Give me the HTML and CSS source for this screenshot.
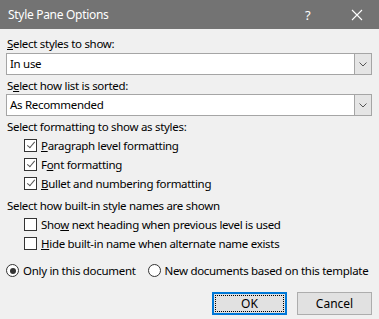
FILE: index.html
```html
<!DOCTYPE html>
<html lang="en">
<head>
    <meta charset="UTF-8">
    <title>Style Pane Options</title>
    <link rel="stylesheet" href="styles.css">
</head>
<body>
    <div class="dialog">
        <div class="titlebar">
            <span class="title">Style Pane Options</span>
            <span class="help">?</span>
            <span class="close">
                <svg width="12" height="12" viewBox="0 0 12 12"><path d="M1 1 L11 11 M11 1 L1 11" stroke="#fff" stroke-width="1.1" fill="none"/></svg>
            </span>
        </div>

        <div class="content">
            <div class="label l1"><u>S</u>elect styles to show:</div>
            <div class="select">
                <span class="value">In use</span>
                <span class="arrow"><svg width="8" height="5" viewBox="0 0 8 5"><path d="M0.5 0.5 L4 4 L7.5 0.5" stroke="#555" fill="none"/></svg></span>
            </div>

            <div class="label l2">S<u>e</u>lect how list is sorted:</div>
            <div class="select">
                <span class="value">As Recommended</span>
                <span class="arrow"><svg width="8" height="5" viewBox="0 0 8 5"><path d="M0.5 0.5 L4 4 L7.5 0.5" stroke="#555" fill="none"/></svg></span>
            </div>

            <div class="label l3">Select formatting to show as styles:</div>
            <div class="checks">
                <div class="check-row"><span class="box checked"></span><span><u>P</u>aragraph level formatting</span></div>
                <div class="check-row"><span class="box checked"></span><span>F<u>o</u>nt formatting</span></div>
                <div class="check-row"><span class="box checked"></span><span><u>B</u>ullet and numbering formatting</span></div>
            </div>

            <div class="label l4">Select how built-in style names are shown</div>
            <div class="checks">
                <div class="check-row"><span class="box"></span><span>Sho<u>w</u> next heading when previous level is used</span></div>
                <div class="check-row"><span class="box"></span><span><u>H</u>ide built-in name when alternate name exists</span></div>
            </div>

            <div class="radios">
                <div class="radio-row"><span class="radio on"></span><span>Only in this document</span></div>
                <div class="radio-row"><span class="radio"></span><span>New documents based on this template</span></div>
            </div>

            <div class="buttons">
                <button class="btn default"><span class="focus">OK</span></button>
                <button class="btn">Cancel</button>
            </div>
        </div>
    </div>
</body>
</html>
```

FILE: styles.css
```css
html, body {
    margin: 0;
    padding: 0;
}
body {
    font-family: "Noto Sans", "Open Sans", sans-serif;
    font-size: 11.5px;
    letter-spacing: -0.3px;
    color: #000;
    background-color: #f0f0f0;
    width: 379px;
    height: 319px;
    overflow: hidden;
    white-space: nowrap;
}
.dialog {
    width: 379px;
    height: 319px;
    background-color: #f0f0f0;
}
.titlebar {
    height: 29px;
    background-color: #737373;
    color: #fff;
    display: flex;
    align-items: center;
}
.title {
    margin-left: 8px;
    font-size: 12px;
    flex: 1;
}
.help {
    width: 12px;
    margin-right: 34px;
    font-size: 13px;
}
.close {
    width: 12px;
    height: 12px;
    margin-right: 16px;
    display: flex;
}
.content {
    padding: 0 7px 0 6px;
}
.label {
    line-height: 15px;
    padding-left: 1px;
}
.l1 {
    margin-top: 7px;
    margin-bottom: 2px;
}
.l2 {
    margin-top: 3px;
    margin-bottom: 1px;
}
.l3 {
    margin-top: 3px;
}
.l4 {
    margin-top: 5px;
}
.select {
    height: 20px;
    border: 1px solid #a5a5a5;
    background-color: #fff;
    display: flex;
    align-items: stretch;
}
.select .value {
    flex: 1;
    padding-left: 3px;
    line-height: 20px;
}
.select .arrow {
    width: 16px;
    background-color: #e5e5e5;
    border-left: 1px solid #a5a5a5;
    display: flex;
    align-items: center;
    justify-content: center;
}
.checks {
    padding-left: 18px;
    margin-top: 2px;
}
.check-row {
    height: 19px;
    display: flex;
    align-items: center;
}
.box {
    width: 11px;
    height: 11px;
    border: 1px solid #333;
    background-color: #fff;
    margin-right: 4px;
    position: relative;
}
.box.checked::after {
    content: "";
    position: absolute;
    left: 4px;
    top: 0px;
    width: 3px;
    height: 7px;
    border-right: 1px solid #555;
    border-bottom: 1px solid #555;
    transform: rotate(40deg);
}
.radios {
    display: flex;
    margin-top: 8px;
}
.radio-row {
    display: flex;
    align-items: center;
    height: 19px;
    margin-right: 12px;
}
.radio {
    width: 11px;
    height: 11px;
    border: 1px solid #333;
    border-radius: 50%;
    background-color: #fff;
    margin-right: 4px;
    position: relative;
}
.radio.on::after {
    content: "";
    position: absolute;
    left: 2.5px;
    top: 2.5px;
    width: 6px;
    height: 6px;
    border-radius: 50%;
    background-color: #333;
}
.buttons {
    display: flex;
    justify-content: flex-end;
    gap: 10px;
    margin-top: 12px;
}
.btn {
    width: 75px;
    height: 23px;
    font-family: inherit;
    font-size: 12px;
    color: #000;
    background-color: #e1e1e1;
    border: 1px solid #adadad;
    padding: 0;
    margin: 0;
}
.btn.default {
    border: 2px solid #0078d7;
    padding: 1px;
}
.btn .focus {
    display: block;
    height: 15px;
    line-height: 15px;
    border: 1px dotted #000;
}
```
